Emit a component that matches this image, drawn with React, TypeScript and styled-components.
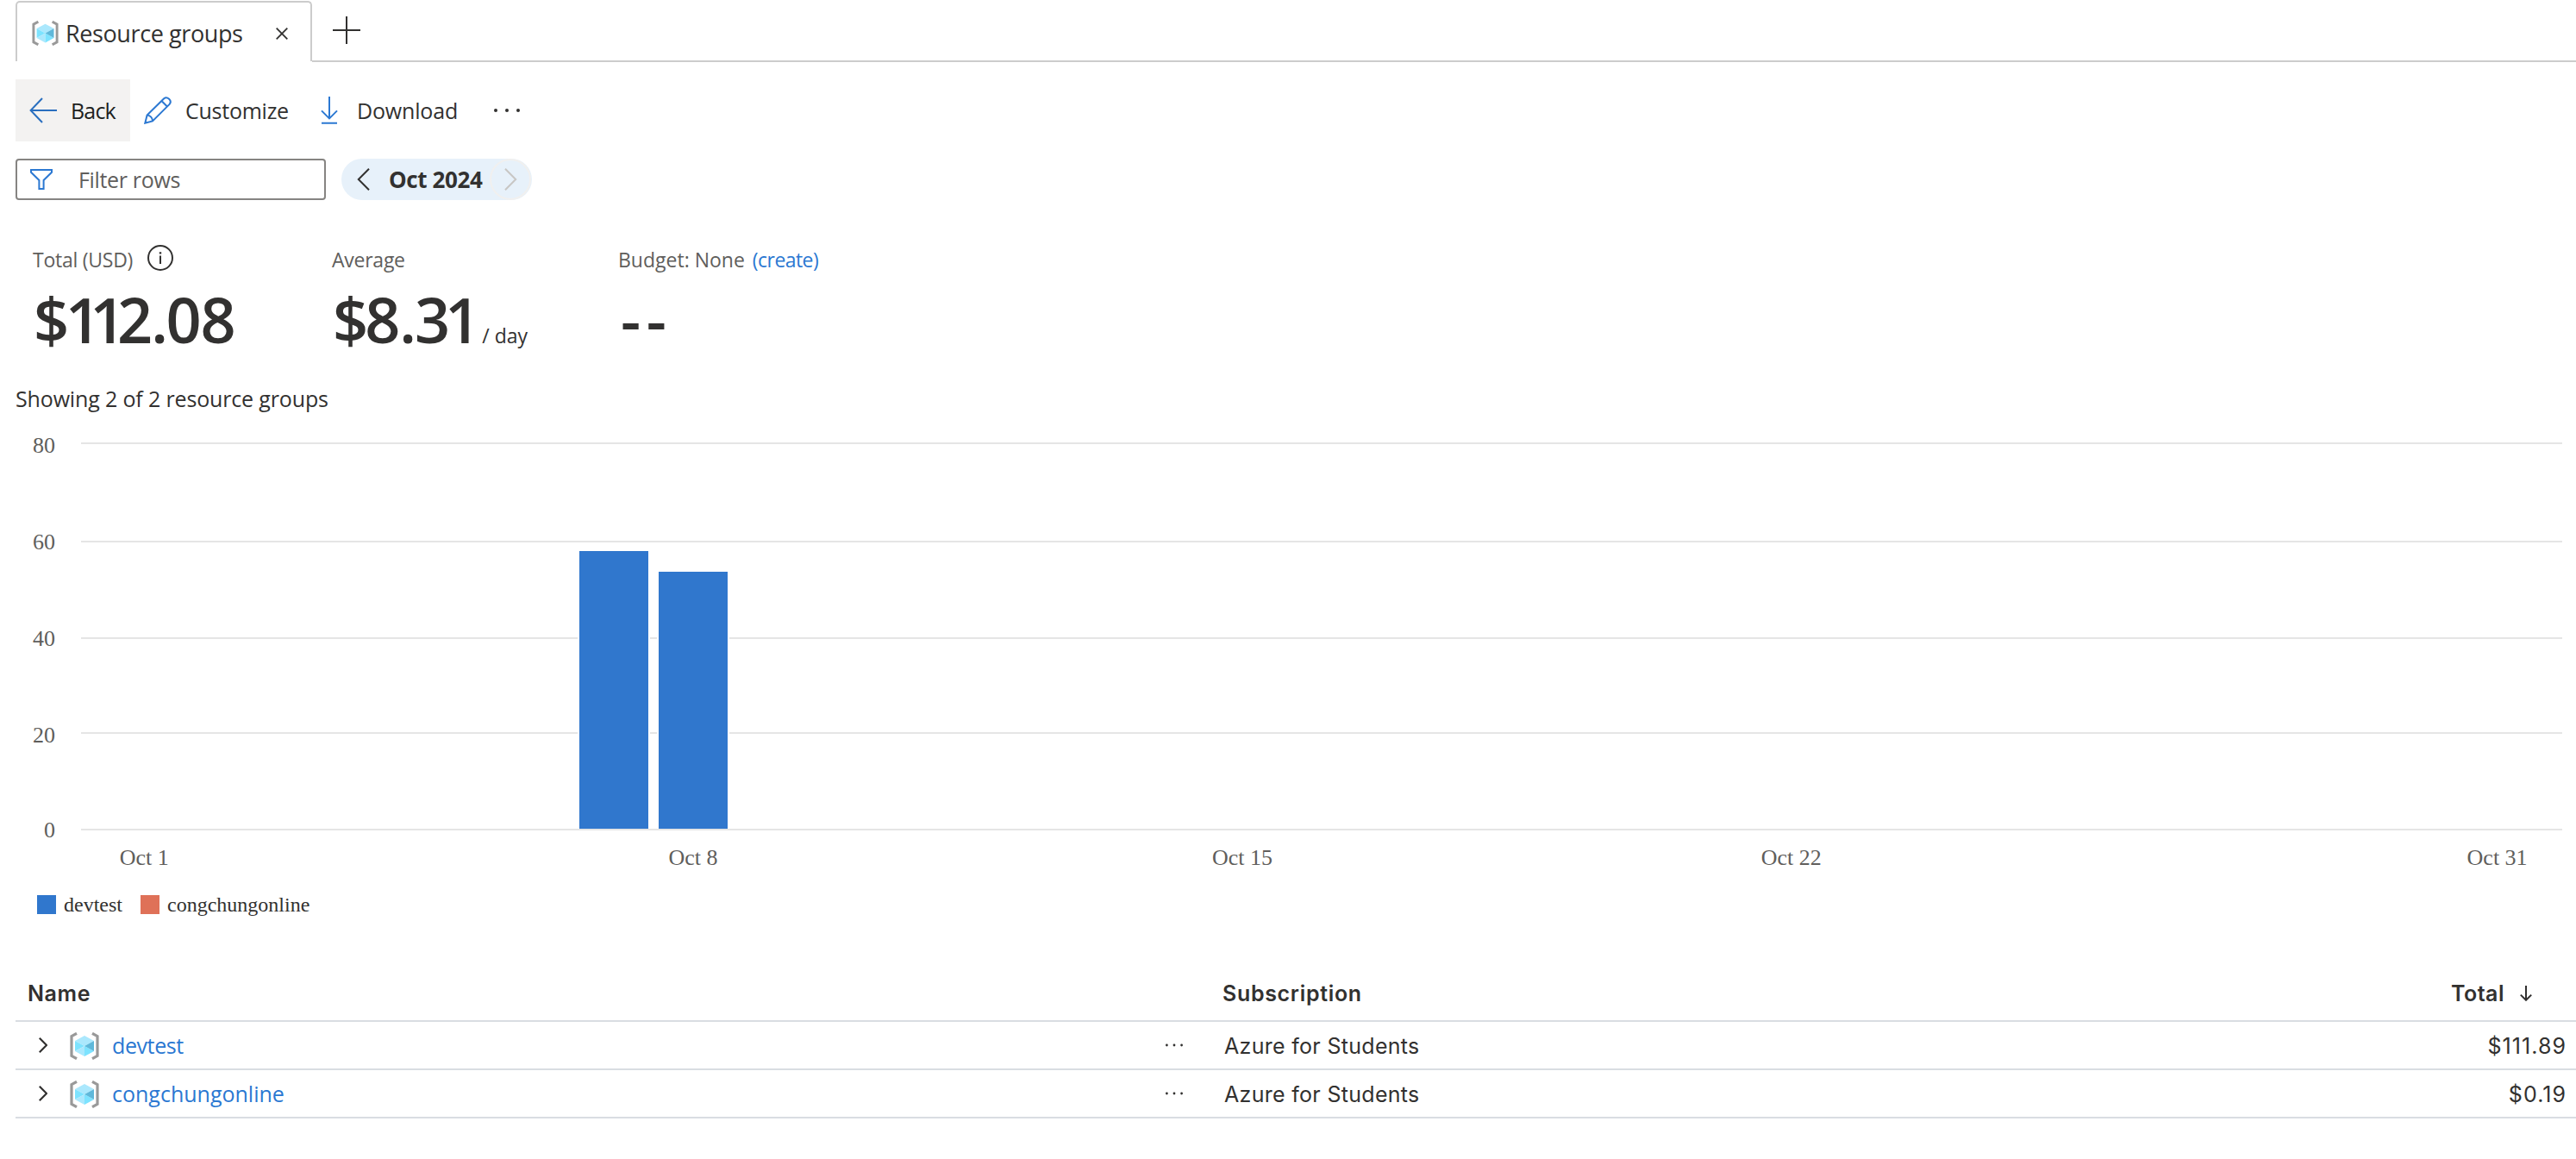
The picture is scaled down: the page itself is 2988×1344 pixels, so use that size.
import React from 'react';
import styled, { createGlobalStyle } from 'styled-components';

const INK = '#323130';
const MUTED = '#605e5c';
const BLUE = '#2b78d2';
const BAR = '#3077cd';
const CORAL = '#df7158';

const GlobalStyle = createGlobalStyle`
  body {
    margin: 0;
    background: #fff;
    color: ${INK};
    font-family: 'Open Sans', 'Noto Sans', sans-serif;
    font-size: 25px;
  }
`;

const Page = styled.main`
  display: flex;
  flex-direction: column;
  height: 1344px;
  overflow: hidden;
  svg { display: block; flex: none; }
`;

const Text = styled.span<{ $track?: number; $color?: string }>`
  white-space: nowrap;
  letter-spacing: ${(p) => p.$track ?? -0.25}px;
  color: ${(p) => p.$color ?? 'inherit'};
`;

/* Tabs */
const TabStrip = styled.div`
  display: flex;
  height: 72px;
  padding-left: 18px;
`;
const Tab = styled.div`
  box-sizing: border-box;
  display: flex;
  align-items: center;
  gap: 8px;
  width: 344px;
  height: 70px;
  margin-top: 1px;
  padding: 3px 26px 0 17px;
  border: 2px solid #cccccc;
  border-bottom: 0;
  border-radius: 5px 5px 0 0;
  font-size: 27px;
  line-height: 38px;
`;
const TabClose = styled.span`
  margin-left: auto;
`;
const TabRest = styled.div`
  box-sizing: border-box;
  flex: 1;
  display: flex;
  align-items: center;
  padding-left: 24px;
  border-bottom: 2px solid #cccccc;
`;

/* Toolbar */
const Toolbar = styled.div`
  display: flex;
  height: 72px;
  margin-top: 20px;
  padding-left: 18px;
`;
const ToolButton = styled.div<{ $width: number; $active?: boolean }>`
  box-sizing: border-box;
  display: flex;
  align-items: center;
  gap: 16px;
  width: ${(p) => p.$width}px;
  padding-left: 16px;
  background: ${(p) => (p.$active ? '#f3f2f1' : 'transparent')};
  color: ${(p) => (p.$active ? '#201f1e' : INK)};
`;

/* Filters */
const FilterBar = styled.div`
  display: flex;
  gap: 18px;
  height: 48px;
  margin-top: 20px;
  padding-left: 18px;
`;
const FilterInput = styled.div`
  box-sizing: border-box;
  display: flex;
  align-items: center;
  gap: 30px;
  width: 360px;
  padding-left: 15px;
  border: 2px solid #868482;
  border-radius: 4px;
  color: ${MUTED};
`;
const PeriodPill = styled.div`
  box-sizing: border-box;
  display: flex;
  align-items: center;
  width: 221px;
  padding: 0 1px 0 18px;
  border-radius: 24px;
  background: #e7f1fa;
  font-size: 26px;
  font-weight: 700;
`;
const PeriodLabel = styled(Text)`
  margin-left: 22px;
`;
const NextPeriod = styled.span`
  box-sizing: border-box;
  display: flex;
  align-items: center;
  justify-content: center;
  width: 48px;
  height: 48px;
  margin-left: auto;
  border: 2px solid #f1f0ef;
  border-radius: 50%;
`;

/* Summary figures */
const Summary = styled.div`
  display: grid;
  grid-template-columns: 347px 332px auto;
  margin-top: 52px;
  padding-left: 38px;
`;
const Kpi = styled.div`
  display: flex;
  flex-direction: column;
  gap: 4px;
`;
const KpiLabel = styled.div`
  display: flex;
  align-items: flex-start;
  height: 34px;
  font-size: 23px;
  line-height: 34px;
  color: ${MUTED};
`;
const InfoSlot = styled.span`
  margin-left: 17px;
`;
const CreateLink = styled(Text)`
  margin-left: 9px;
`;
const Figure = styled.div<{ $indent?: number }>`
  display: flex;
  align-items: baseline;
  height: 96px;
  padding-left: ${(p) => p.$indent ?? 1}px;
  font-size: 72px;
  font-weight: 600;
  line-height: 96px;
`;
const Glyph = styled.span<{ $track: number }>`
  letter-spacing: ${(p) => p.$track}px;
`;
const Unit = styled(Text)`
  margin-left: 2px;
  font-size: 23px;
  font-weight: 400;
  line-height: 34px;
`;
const Showing = styled.div`
  height: 36px;
  margin-top: 26px;
  padding-left: 18px;
  line-height: 36px;
`;

/* Chart */
const ChartSvg = styled.svg`
  width: 2988px;
  height: 540px;
  font-family: 'Liberation Serif', 'Times New Roman', serif;
  font-size: 26px;
  fill: ${MUTED};
`;
const Legend = styled.div`
  display: flex;
  gap: 21px;
  height: 22px;
  margin-top: 18px;
  padding-left: 43px;
  font-family: 'Liberation Serif', 'Times New Roman', serif;
  font-size: 24px;
  line-height: 22px;
`;
const LegendItem = styled.div`
  display: flex;
  gap: 9px;
`;
const Swatch = styled.span<{ $color: string }>`
  width: 22px;
  height: 22px;
  background: ${(p) => p.$color};
`;

/* Table */
const Table = styled.div`
  margin: 61px 0 0 18px;
  font-family: Inter, 'Open Sans', sans-serif;
  font-size: 25px;
`;
const Row = styled.div<{ $head?: boolean }>`
  display: grid;
  grid-template-columns: 1400px 1fr 200px;
  align-items: center;
  height: ${(p) => (p.$head ? 62 : 54)}px;
  border-bottom: 2px solid #d9dde2;
  font-weight: ${(p) => (p.$head ? 600 : 400)};
`;
const HeadCell = styled.div`
  padding-left: 14px;
  & + & { padding-left: 0; }
`;
const HeadTotal = styled.div`
  display: flex;
  align-items: center;
  justify-content: flex-end;
  gap: 18px;
  padding-right: 51px;
`;
const NameCell = styled.div`
  display: flex;
  align-items: center;
  padding: 0 46px 0 27px;
`;
const IconSlot = styled.span`
  margin: 2px 15px 0 26px;
`;
const NameLink = styled(Text)`
  flex: 1;
  color: ${BLUE};
  font-family: 'Open Sans', 'Noto Sans', sans-serif;
`;
const SubscriptionCell = styled.div`
  padding: 1px 0 0 2px;
`;
const TotalCell = styled.div`
  padding: 1px 11px 0 0;
  text-align: right;
`;

type Line = { d: string; w: number; h: number; color?: string; stroke?: number };
const LineIcon = ({ d, w, h, color = INK, stroke = 2 }: Line) => (
  <svg width={w} height={h} viewBox={`0 0 ${w} ${h}`} fill="none" stroke={color} strokeWidth={stroke}>
    <path d={d} />
  </svg>
);

const Dots = ({ w, r }: { w: number; r: number }) => (
  <svg width={w} height={8} viewBox={`0 0 ${w} 8`} fill={INK}>
    <circle cx={r} cy={4} r={r} />
    <circle cx={w / 2} cy={4} r={r} />
    <circle cx={w - r} cy={4} r={r} />
  </svg>
);

const ResourceGroupIcon = ({ w, h }: { w: number; h: number }) => (
  <svg width={w} height={h} viewBox="0 0 34 32">
    <path d="M8 1.3 2 4.6V27.4L8 30.7M26 1.3 32 4.6V27.4L26 30.7" fill="none" stroke="#999" strokeWidth="3.2" />
    <path d="M17 4 28 10 17 16 6 10Z" fill="#abe8fd" />
    <path d="M6 10 17 16 6 22Z" fill="#7de3ff" />
    <path d="M6 22 17 16V28Z" fill="#abe8fd" />
    <path d="M17 16 28 22 17 28Z" fill="#7de3ff" />
    <path d="M28 10V22L17 16Z" fill="#5fb8da" />
  </svg>
);

const grid = [
  { label: '80', y: 514, base: 525 },
  { label: '60', y: 628, base: 637 },
  { label: '40', y: 740, base: 749 },
  { label: '20', y: 850, base: 861 },
  { label: '0', y: 962, base: 971 },
];
const ticks = [1, 8, 15, 22, 31];
const dayX = (day: number) => 167.2 + (day - 1) * 90.98;
const bars = [
  { x: 672, top: 639 },
  { x: 764, top: 663 },
];

const Chart = () => (
  <ChartSvg viewBox="0 480 2988 540">
    {grid.map((g) => (
      <React.Fragment key={g.label}>
        <text x={64} y={g.base} textAnchor="end">{g.label}</text>
        <rect x={94} y={g.y - 1} width={2878} height={2} fill="#e5e5e5" />
      </React.Fragment>
    ))}
    {bars.map((b) => (
      <React.Fragment key={b.x}>
        <rect x={b.x - 2} y={b.top - 2} width={84} height={961 - b.top + 2} fill="#fff" />
        <rect x={b.x} y={b.top} width={80} height={961 - b.top} fill={BAR} />
      </React.Fragment>
    ))}
    {ticks.map((d) => (
      <text key={d} x={dayX(d)} y={1003} textAnchor="middle">{`Oct ${d}`}</text>
    ))}
  </ChartSvg>
);

const Tracked = ({ text, track }: { text: string; track: number[] }) => (
  <span>
    {text.split('').map((ch, i) => (
      <Glyph key={i} $track={track[i] ?? 0}>{ch}</Glyph>
    ))}
  </span>
);

const rows = [
  { name: 'devtest', track: -0.4, total: '$111.89' },
  { name: 'congchungonline', track: 0, total: '$0.19' },
];

export default function App() {
  return (
    <Page>
      <GlobalStyle />
      <TabStrip>
        <Tab>
          <ResourceGroupIcon w={31} h={29} />
          <Text $track={-0.4}>Resource groups</Text>
          <TabClose>
            <LineIcon w={14} h={14} d="M.7.7 13.3 13.3M13.3.7.7 13.3" stroke={1.8} />
          </TabClose>
        </Tab>
        <TabRest>
          <LineIcon w={32} h={32} d="M0 16H32M16 0V32" />
        </TabRest>
      </TabStrip>

      <Toolbar>
        <ToolButton $width={133} $active>
          <LineIcon w={32} h={32} d="M15 2 1.6 16 15 30M1.6 16H32" color="#2a6fbf" />
          <Text $track={-0.8}>Back</Text>
        </ToolButton>
        <ToolButton $width={199}>
          <LineIcon
            w={32}
            h={32}
            color={BLUE}
            d="M1.3 30.7 3.6 21.6 23.2 2.3C26.8-.8 33.2 4.6 29.6 8.9L10 28.4ZM3.6 21.6C7.2 21.8 10 24.6 10 28.4M20.4 5 26.9 11.5"
          />
          <Text>Customize</Text>
        </ToolButton>
        <ToolButton $width={207}>
          <LineIcon w={32} h={32} color={BLUE} d="M16 0V25M7 16.4 16 25.4 25 16.4M7 30.8H25" />
          <Text $track={-0.17}>Download</Text>
        </ToolButton>
        <ToolButton $width={60}>
          <Dots w={30} r={2} />
        </ToolButton>
      </Toolbar>

      <FilterBar>
        <FilterInput>
          <LineIcon w={26} h={24} color={BLUE} d="M1 1H25V3.8L15.6 13V23H10.4V13L1 3.8Z" />
          <Text $track={-0.34}>Filter rows</Text>
        </FilterInput>
        <PeriodPill>
          <LineIcon w={15} h={26} d="M14 .7 1.8 13 14 25.3" />
          <PeriodLabel $track={-0.4}>Oct 2024</PeriodLabel>
          <NextPeriod>
            <LineIcon w={15} h={26} d="M1 .7 13.2 13 1 25.3" color="#c8c6c4" />
          </NextPeriod>
        </PeriodPill>
      </FilterBar>

      <Summary>
        <Kpi>
          <KpiLabel>
            <Text>Total (USD)</Text>
            <InfoSlot>
              <svg width="30" height="30" viewBox="0 0 30 30">
                <circle cx="15" cy="15" r="14" fill="none" stroke={INK} strokeWidth="2" />
                <path d="M14 12.5H16V22H14ZM13.8 8.2H16.2V10.4H13.8Z" fill={INK} />
              </svg>
            </InfoSlot>
          </KpiLabel>
          <Figure>
            <Tracked text="$112.08" track={[-4.5, -12.5, -9.5, -2, -2.5, -1]} />
          </Figure>
        </Kpi>
        <Kpi>
          <KpiLabel>
            <Text>Average</Text>
          </KpiLabel>
          <Figure>
            <Tracked text="$8.31" track={[-4, -1, -2.2, -6]} />
            <Unit $track={0}>/ day</Unit>
          </Figure>
        </Kpi>
        <Kpi>
          <KpiLabel>
            <Text $track={0}>Budget: None</Text>
            <CreateLink $track={-0.55} $color={BLUE}>(create)</CreateLink>
          </KpiLabel>
          <Figure $indent={3}>
            <Tracked text="--" track={[6.5]} />
          </Figure>
        </Kpi>
      </Summary>

      <Showing>
        <Text $track={-0.15}>Showing 2 of 2 resource groups</Text>
      </Showing>

      <Chart />
      <Legend>
        <LegendItem>
          <Swatch $color={BAR} />
          devtest
        </LegendItem>
        <LegendItem>
          <Swatch $color={CORAL} />
          congchungonline
        </LegendItem>
      </Legend>

      <Table>
        <Row $head>
          <HeadCell>
            <Text $track={0.6}>Name</Text>
          </HeadCell>
          <HeadCell>
            <Text $track={0.68}>Subscription</Text>
          </HeadCell>
          <HeadTotal>
            <Text $track={0.5}>Total</Text>
            <LineIcon w={14} h={18} d="M7 0V17M.8 10.6 7 16.8 13.2 10.6" />
          </HeadTotal>
        </Row>
        {rows.map((r) => (
          <Row key={r.name}>
            <NameCell>
              <LineIcon w={10} h={18} d="M.8.8 9 9 .8 17.2" stroke={2.2} />
              <IconSlot>
                <ResourceGroupIcon w={34} h={32} />
              </IconSlot>
              <NameLink $track={r.track}>{r.name}</NameLink>
              <Dots w={20} r={1.4} />
            </NameCell>
            <SubscriptionCell>
              <Text $track={0.3}>Azure for Students</Text>
            </SubscriptionCell>
            <TotalCell>
              <Text $track={1.05}>{r.total}</Text>
            </TotalCell>
          </Row>
        ))}
      </Table>
    </Page>
  );
}
